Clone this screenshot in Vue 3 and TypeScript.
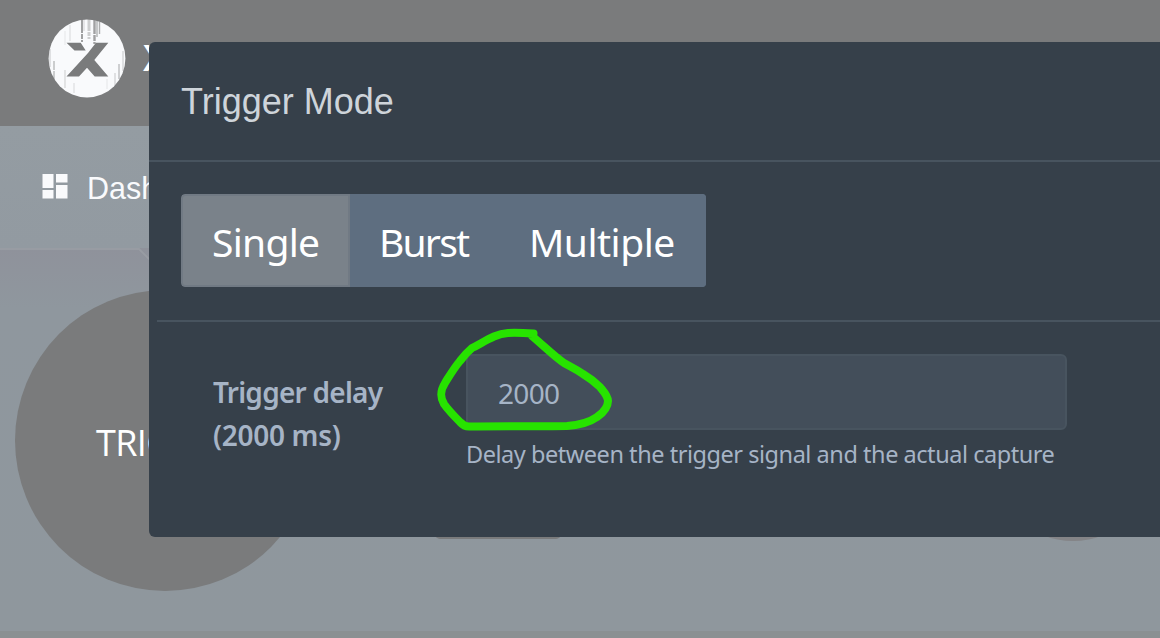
<template>
  <div class="page">
    <header class="topbar">
      <svg class="logo" viewBox="0 0 78 80" width="78" height="80">
        <ellipse cx="39" cy="39.5" rx="38.4" ry="39.1" fill="#f9fafc" />
        <g fill="none" stroke="#7a7b7c">
          <path
            v-for="(s, i) in streaks"
            :key="i"
            :d="`M${s.x} ${s.y}v${s.length}`"
            :stroke-width="s.width"
            :stroke-dasharray="s.dash"
            :opacity="s.opacity"
          />
        </g>
        <path
          d="M18.5 23.7H32.7L37.7 31.5H26.5ZM48 23.7H60.3L46.3 41L60.3 57.4H46.7L39 48.7L31 57.4H18.5L40 34Z"
          fill="#7a7b7c"
        />
      </svg>
      <span class="brand">X</span>
    </header>

    <nav class="nav">
      <svg class="dash-icon" viewBox="0 0 26 25" width="26" height="25">
        <path d="M0.5 0h11v14h-11zM14 0h11.5v8.5H14zM0.5 16h11v8.5h-11zM14 11h11.5v13.5H14z" fill="#f9fafc" />
      </svg>
      <span class="nav-label">Dashboard</span>
    </nav>

    <main class="content">
      <svg class="tab-edge" viewBox="0 0 180 40" width="180" height="40">
        <path d="M0 1H139L178 40" fill="none" stroke="#989ca3" stroke-width="2" />
      </svg>
      <div class="controls">
        <button class="trigger">TRIG</button>
        <div class="small-button"></div>
        <div class="round-button"></div>
      </div>
    </main>
    <footer class="footer"></footer>

    <section class="modal">
      <h3 class="modal-title">Trigger Mode</h3>
      <div class="modal-body">
        <div class="mode-group">
          <button
            v-for="m in modes"
            :key="m"
            :class="['mode-btn', m.toLowerCase(), { active: mode === m }]"
            @click="mode = m"
          >
            {{ m }}
          </button>
        </div>
      </div>
      <div class="delay-row">
        <label class="delay-label" for="delay">
          <span class="label-name">Trigger delay</span>
          <span class="label-value">({{ delay }} ms)</span>
        </label>
        <div class="delay-field">
          <input id="delay" v-model="delay" class="delay-input" type="text" />
          <small class="hint">Delay between the trigger signal and the actual capture</small>
        </div>
      </div>
    </section>

    <!-- hand-drawn marker around the delay value -->
    <svg class="marker" viewBox="0 0 180 112" width="180" height="112">
      <path
        d="M98.5 8.5C90 8 81 7.500 73 8Q66 8.500 59 11.500C51 15 45 19 37 23Q31 28 25 36C19 43 15 50 10 58C5 66 5 72 9 79C14 86 20 92 25 97Q29 101.500 34 101.500C68 101 100 101.500 132 101C145 100 155 97 162 92C170 87 173 80 173 76C173 71 169 67 165 62C160 57 153 52 148 49C141 44 136 42 129 38C120 32 110 22 97 11"
        fill="none"
        stroke="#27e300"
        stroke-width="8"
        stroke-linecap="round"
        stroke-linejoin="round"
      />
    </svg>
  </div>
</template>

<script setup lang="ts">
import { ref } from 'vue'

interface Streak {
  x: number
  y: number
  length: number
  width: number
  opacity: number
  dash?: string
}

const modes = ['Single', 'Burst', 'Multiple']
const mode = ref('Single')
const delay = ref('2000')

// Worn paint lines of the logo
const streaks: Streak[] = [
  { x: 34, y: 0, length: 23, width: 2, opacity: 0.7, dash: '14 1 5 1' },
  { x: 36, y: 0, length: 12, width: 1, opacity: 0.3 },
  { x: 41, y: 0, length: 20, width: 3, opacity: 0.35, dash: '12 1 4 1' },
  { x: 46.5, y: 1, length: 24, width: 2.4, opacity: 0.7, dash: '14 1 6 1' },
  { x: 49, y: 1, length: 17, width: 1.6, opacity: 0.5 },
  { x: 51.5, y: 3, length: 12, width: 1.4, opacity: 0.6 },
  { x: 22, y: 6, length: 16, width: 1, opacity: 0.25 },
  { x: 17, y: 12, length: 14, width: 1, opacity: 0.15 },
  { x: 26, y: 64, length: 10, width: 1, opacity: 0.25 },
  { x: 17, y: 51, length: 18, width: 1.4, opacity: 0.25 },
  { x: 6, y: 42, length: 20, width: 1.4, opacity: 0.5, dash: '9 1' },
  { x: 2, y: 30, length: 18, width: 1, opacity: 0.4 },
  { x: 71, y: 45, length: 15, width: 1.5, opacity: 0.45 },
  { x: 75, y: 32, length: 20, width: 1, opacity: 0.4 },
  { x: 67, y: 54, length: 14, width: 1, opacity: 0.4 },
  { x: 59, y: 60, length: 10, width: 1, opacity: 0.15 },
]
</script>

<style>
body {
  margin: 0;
  overflow: hidden;
}
</style>

<style scoped>
.page {
  position: relative;
  display: flex;
  flex-direction: column;
  width: 1160px;
  height: 638px;
  overflow: hidden;
  background: #8f979d;
  font-family: 'Noto Sans', sans-serif;
}

.topbar {
  display: flex;
  align-items: center;
  box-sizing: border-box;
  height: 126px;
  padding: 0 0 8px 48px;
  background: #7a7b7c;
}

.brand {
  margin-left: 17px;
  padding-bottom: 2px;
  color: #fff;
  font-size: 36px;
  font-weight: 600;
  line-height: 40px;
}

.nav {
  display: flex;
  align-items: center;
  box-sizing: border-box;
  height: 122px;
  padding: 0 0 2px 42px;
  background: linear-gradient(#949ca2, #929aa1);
  color: #f9fafc;
  font-family: 'Liberation Sans', sans-serif;
  font-size: 30.5px;
  gap: 19px;
}

.nav-label {
  padding-top: 4px;
}

.content {
  flex: 1;
  background: linear-gradient(#8f929b, #8f979e 60px, #8f979d);
}

.tab-edge {
  display: block;
}

.controls {
  display: flex;
  margin: 2px 0 0 15px;
}

.trigger {
  width: 300px;
  height: 301px;
  padding: 4px 0 0 81px;
  border: 0;
  border-radius: 50%;
  background: #7a7b7c;
  color: #fff;
  font-family: 'Open Sans', sans-serif;
  font-size: 36px;
  letter-spacing: -0.6px;
  text-align: left;
}

.small-button {
  width: 126px;
  height: 80px;
  margin: 169px 0 0 120px;
  border-radius: 5px;
  background: #7a7b7c;
}

.round-button {
  width: 160px;
  height: 160px;
  margin: 91px 0 0 432px;
  border-radius: 50%;
  background: #848487;
}

.footer {
  height: 7px;
  background: #8a9092;
}

.modal {
  position: absolute;
  top: 42px;
  left: 149px;
  width: 1040px;
  height: 495px;
  border-radius: 6px;
  background: #36404a;
}

.modal-title {
  box-sizing: border-box;
  height: 120px;
  margin: 0;
  padding-left: 32px;
  border-bottom: 2px solid #48545f;
  color: #ced4da;
  font-family: 'Liberation Sans', sans-serif;
  font-size: 36px;
  font-weight: 400;
  line-height: 119px;
}

.modal-body {
  box-sizing: border-box;
  height: 160px;
  margin-left: 8px;
  padding: 32px 0 0 24px;
  border-bottom: 2px solid #48545f;
}

.mode-group {
  display: flex;
  width: 525px;
  height: 93px;
  overflow: hidden;
  border-radius: 4px;
}

.mode-btn {
  box-sizing: border-box;
  padding: 1px 0 0;
  border: 2px solid #5e6e80;
  background: #5e6e80;
  color: #fff;
  font-family: inherit;
  font-size: 39px;
  text-align: left;
  cursor: pointer;
}

.mode-btn.active {
  border-color: #717a84;
  border-radius: 4px 0 0 4px;
  background: #7a828a;
}

.single {
  width: 169px;
  padding-left: 29px;
  letter-spacing: -0.7px;
}

.burst {
  width: 149px;
  padding-left: 27px;
  letter-spacing: -1.8px;
}

.multiple {
  width: 207px;
  padding-left: 28px;
  letter-spacing: -0.5px;
}

.delay-row {
  display: flex;
  padding: 32px 0 0 64px;
  color: #a6b4c6;
}

.delay-label {
  display: flex;
  flex-direction: column;
  width: 253px;
  padding-top: 17px;
  font-size: 28px;
  font-weight: 600;
  line-height: 43px;
}

.label-name {
  letter-spacing: -0.75px;
}

.label-value {
  letter-spacing: -0.3px;
}

.delay-field {
  display: flex;
  flex-direction: column;
}

.delay-input {
  box-sizing: border-box;
  width: 601px;
  height: 76px;
  padding: 1px 30px 0;
  border: 2px solid #48545f;
  border-radius: 6px;
  outline: none;
  background: #434e5a;
  color: #a6b4c6;
  font-family: inherit;
  font-size: 28px;
  letter-spacing: -0.7px;
}

.hint {
  margin-top: 7px;
  font-size: 23.5px;
  letter-spacing: -0.46px;
  line-height: 34px;
  white-space: nowrap;
}

.marker {
  position: absolute;
  top: 325px;
  left: 435px;
  pointer-events: none;
}
</style>
